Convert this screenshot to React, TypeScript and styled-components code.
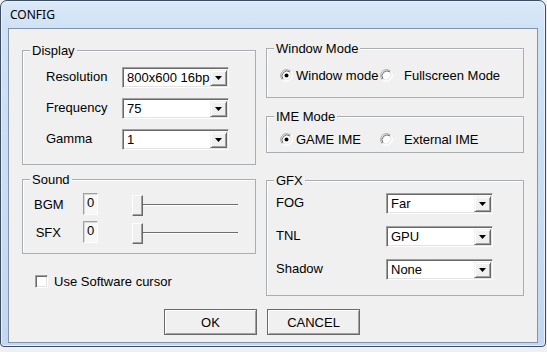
import React from 'react';
import styled, { createGlobalStyle } from 'styled-components';

const GlobalStyle = createGlobalStyle`
  html, body {
    margin: 0;
    padding: 0;
    background: #eef0f2;
  }
  body {
    font-family: "Liberation Sans", Arial, sans-serif;
    font-size: 13px;
    color: #000;
  }
`;

const Window = styled.div`
  box-sizing: border-box;
  width: 546px;
  height: 347px;
  border: 1px solid #3d4d61;
  border-radius: 7px 7px 4px 4px;
  background: linear-gradient(#dbe9f8 0px, #cfe2f6 27px, #c3d8f0 100%);
  box-shadow: inset 0 0 0 1px #e9f2fc;
  padding: 0 7px 3px 7px;
  display: flex;
  flex-direction: column;
`;

const TitleBar = styled.div`
  height: 27px;
  display: flex;
  align-items: center;
  padding-left: 2px;
  font-family: "Noto Sans", "Open Sans", sans-serif;
  font-size: 12px;
  color: #000;
`;

const Client = styled.div`
  flex: 1;
  box-sizing: border-box;
  border: 1px solid #8394aa;
  background: #f0f0f0;
  padding-left: 13px;
  display: flex;
  flex-direction: column;
`;

const TopArea = styled.div`
  display: flex;
  align-items: flex-start;
  gap: 10px;
`;

const Column = styled.div<{ $width: number; $top: number }>`
  width: ${(p) => p.$width}px;
  margin-top: ${(p) => p.$top}px;
  display: flex;
  flex-direction: column;
`;

const Group = styled.div<{ $height: number; $padTop: number; $gap?: number }>`
  position: relative;
  box-sizing: border-box;
  height: ${(p) => p.$height}px;
  margin-top: ${(p) => p.$gap ?? 0}px;
  padding-top: ${(p) => p.$padTop}px;
  border: 1px solid #a9aeb3;
  box-shadow: 1px 1px 0 #fff inset;
`;

const GroupLabel = styled.span`
  position: absolute;
  top: -8px;
  left: 7px;
  padding: 0 2px 0 2px;
  line-height: 15px;
  background: #f0f0f0;
`;

const FieldGrid = styled.div<{ $cols: string; $padLeft: number; $rowGap: number }>`
  display: grid;
  grid-template-columns: ${(p) => p.$cols};
  row-gap: ${(p) => p.$rowGap}px;
  padding-left: ${(p) => p.$padLeft}px;
  align-items: center;
`;

const FieldLabel = styled.span`
  line-height: 15px;
  margin-top: -3px;
`;

const ComboBox = styled.div`
  box-sizing: border-box;
  width: 107px;
  height: 21px;
  display: flex;
  align-items: stretch;
  background: #fff;
  border-top: 1px solid #a0a0a0;
  border-left: 1px solid #a0a0a0;
  border-right: 1px solid #fff;
  border-bottom: 1px solid #fff;
  box-shadow: inset 1px 1px 0 #696969, inset -1px -1px 0 #e3e3e3;
  padding: 2px 1px 1px 2px;
`;

const ComboText = styled.span`
  flex: 1;
  min-width: 0;
  overflow: hidden;
  white-space: nowrap;
  padding-left: 2px;
  line-height: 16px;
`;

const ComboButton = styled.span`
  box-sizing: border-box;
  flex: none;
  width: 17px;
  display: flex;
  align-items: center;
  justify-content: center;
  background: #f0f0f0;
  border-top: 1px solid #f0f0f0;
  border-left: 1px solid #f0f0f0;
  border-right: 1px solid #696969;
  border-bottom: 1px solid #696969;
  box-shadow: inset 1px 1px 0 #fff, inset -1px -1px 0 #a0a0a0;
`;

const Combo: React.FC<{ value: string }> = ({ value }) => (
  <ComboBox>
    <ComboText>{value}</ComboText>
    <ComboButton>
      <svg width="7" height="4" viewBox="0 0 7 4">
        <path d="M0 0h7L3.5 4z" fill="#000" />
      </svg>
    </ComboButton>
  </ComboBox>
);

const RadioRow = styled.div`
  display: grid;
  grid-template-columns: 100px auto;
  padding-left: 13px;
`;

const RadioOption = styled.label<{ $spacing: number }>`
  display: flex;
  align-items: center;
  gap: ${(p) => p.$spacing}px;
  line-height: 15px;
`;

const Radio: React.FC<{ checked?: boolean; label: string; spacing: number }> = ({
  checked,
  label,
  spacing,
}) => (
  <RadioOption $spacing={spacing}>
    <svg width="13" height="13" viewBox="0 0 13 13">
      <circle cx="6.5" cy="6.5" r="6" fill="#fff" />
      <path d="M2.26 10.74A6 6 0 0 1 10.74 2.26" fill="none" stroke="#a0a0a0" />
      <path d="M3 10A5 5 0 0 1 10 3" fill="none" stroke="#696969" />
      <path d="M10.74 2.26A6 6 0 0 1 2.26 10.74" fill="none" stroke="#fff" />
      <path d="M10 3A5 5 0 0 1 3 10" fill="none" stroke="#e3e3e3" />
      {checked && <circle cx="6.5" cy="6.5" r="2" fill="#000" />}
    </svg>
    <span>{label}</span>
  </RadioOption>
);

const SoundGrid = styled.div`
  display: grid;
  grid-template-columns: 27px 15px 118px;
  column-gap: 22px;
  row-gap: 6px;
  padding-left: 11px;
  align-items: center;
`;

const SoundLabel = styled.span`
  text-align: right;
  line-height: 15px;
`;

const EditBox = styled.div`
  box-sizing: border-box;
  height: 22px;
  background: #f7f7f7;
  border-top: 1px solid #a0a0a0;
  border-left: 1px solid #a0a0a0;
  border-right: 1px solid #fff;
  border-bottom: 1px solid #fff;
  box-shadow: inset 1px 1px 0 #d8d8d8;
  padding: 2px 0 0 3px;
  line-height: 14px;
`;

const Slider = styled.div`
  padding-left: 12px;
  height: 22px;
  display: flex;
  align-items: center;
`;

const Thumb = styled.span`
  box-sizing: border-box;
  flex: none;
  width: 11px;
  height: 21px;
  margin-top: 2px;
  background: #f0f0f0;
  border-top: 1px solid #fff;
  border-left: 1px solid #fff;
  border-right: 1px solid #696969;
  border-bottom: 1px solid #696969;
  box-shadow: inset -1px -1px 0 #a0a0a0;
`;

const Track = styled.span`
  flex: 1;
  height: 1px;
  margin-top: 2px;
  background: #6d6d6d;
  border-bottom: 1px solid #fff;
`;

const CheckRow = styled.label`
  display: flex;
  align-items: center;
  gap: 6px;
  margin-top: 20px;
  padding-left: 13px;
  line-height: 15px;
`;

const CheckBox = styled.span`
  box-sizing: border-box;
  width: 13px;
  height: 13px;
  background: #fff;
  border-top: 1px solid #a0a0a0;
  border-left: 1px solid #a0a0a0;
  border-right: 1px solid #fff;
  border-bottom: 1px solid #fff;
  box-shadow: inset 1px 1px 0 #696969, inset -1px -1px 0 #e3e3e3;
`;

const ButtonRow = styled.div`
  display: flex;
  gap: 10px;
  margin-top: 13px;
  padding-left: 142px;
`;

const Button = styled.button`
  box-sizing: border-box;
  width: 93px;
  height: 26px;
  padding: 0;
  font-family: "Liberation Sans", Arial, sans-serif;
  font-size: 13px;
  color: #000;
  background: #f0f0f0;
  border: 1px solid #6a6a6a;
  box-shadow: inset 1px 1px 0 #fff, inset -1px -1px 0 #a0a0a0;
`;

export default function App() {
  return (
    <>
      <GlobalStyle />
      <Window>
        <TitleBar>CONFIG</TitleBar>
        <Client>
          <TopArea>
            <Column $width={234} $top={21}>
              <Group $height={115} $padTop={16}>
                <GroupLabel>Display</GroupLabel>
                <FieldGrid $cols="76px 107px" $padLeft={23} $rowGap={10}>
                  <FieldLabel>Resolution</FieldLabel>
                  <Combo value="800x600 16bpp" />
                  <FieldLabel>Frequency</FieldLabel>
                  <Combo value="75" />
                  <FieldLabel>Gamma</FieldLabel>
                  <Combo value="1" />
                </FieldGrid>
              </Group>
              <Group $height={75} $padTop={13} $gap={14}>
                <GroupLabel>Sound</GroupLabel>
                <SoundGrid>
                  <SoundLabel>BGM</SoundLabel>
                  <EditBox>0</EditBox>
                  <Slider>
                    <Thumb />
                    <Track />
                  </Slider>
                  <SoundLabel>SFX</SoundLabel>
                  <EditBox>0</EditBox>
                  <Slider>
                    <Thumb />
                    <Track />
                  </Slider>
                </SoundGrid>
              </Group>
              <CheckRow>
                <CheckBox />
                <span>Use Software cursor</span>
              </CheckRow>
            </Column>
            <Column $width={258} $top={19}>
              <Group $height={50} $padTop={19}>
                <GroupLabel>Window Mode</GroupLabel>
                <RadioRow>
                  <Radio checked label="Window mode" spacing={3} />
                  <Radio label="Fullscreen Mode" spacing={11} />
                </RadioRow>
              </Group>
              <Group $height={37} $padTop={15} $gap={18}>
                <GroupLabel>IME Mode</GroupLabel>
                <RadioRow>
                  <Radio checked label="GAME IME" spacing={3} />
                  <Radio label="External IME" spacing={11} />
                </RadioRow>
              </Group>
              <Group $height={116} $padTop={12} $gap={27}>
                <GroupLabel>GFX</GroupLabel>
                <FieldGrid $cols="110px 107px" $padLeft={9} $rowGap={12}>
                  <FieldLabel>FOG</FieldLabel>
                  <Combo value="Far" />
                  <FieldLabel>TNL</FieldLabel>
                  <Combo value="GPU" />
                  <FieldLabel>Shadow</FieldLabel>
                  <Combo value="None" />
                </FieldGrid>
              </Group>
            </Column>
          </TopArea>
          <ButtonRow>
            <Button>OK</Button>
            <Button>CANCEL</Button>
          </ButtonRow>
        </Client>
      </Window>
    </>
  );
}
